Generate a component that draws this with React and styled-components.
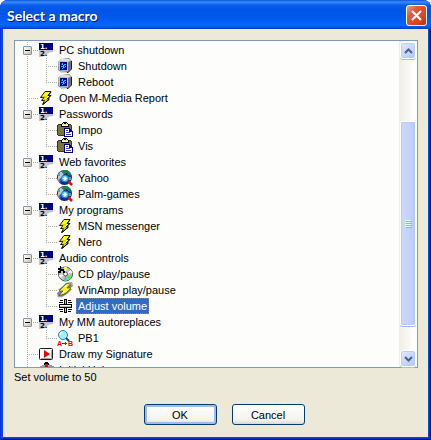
import React, { useState } from "react";
import styled, { createGlobalStyle, css } from "styled-components";

const COLORS = {
  face: "#ece9d8",
  paper: "#fdfefc",
  listBorder: "#7f9db9",
  line: "#aca899",
  select: "#316ac5",
};

const GlobalStyle = createGlobalStyle`
  * {
    box-sizing: border-box;
  }

  body {
    margin: 0;
    background: #fff;
    color: #000;
    font: 11px/16px "Liberation Sans", Arial, sans-serif;
  }

  button {
    font: inherit;
    color: inherit;
    padding: 0;
  }
`;

const Dialog = styled.div`
  display: flex;
  flex-direction: column;
  height: 100vh;
  padding: 0 3px 3px;
  overflow: hidden;
  border-radius: 8px 8px 0 0;
  background: #0848dc;
  box-shadow: inset 1px 0 #0831d9, inset -1px -1px #00138c,
    inset -2px -2px #0030c0;
`;

const TitleBar = styled.header`
  display: flex;
  align-items: center;
  justify-content: space-between;
  flex: none;
  height: 29px;
  margin: 0 -3px;
  padding: 2px 4px 0 7px;
  background: linear-gradient(
    #0a55d8 0,
    #3a8cff 2px,
    #0a5fea 5px,
    #0054e3 10px,
    #0058ee 18px,
    #0566ff 25px,
    #0055e8 27px,
    #0038b8 29px
  );
`;

const Title = styled.h1`
  margin: 0;
  color: #fff;
  font: bold 14px/18px Lato, sans-serif;
  text-shadow: 1px 1px #0a1883;
`;

const CloseButton = styled.button`
  display: flex;
  align-items: center;
  justify-content: center;
  width: 21px;
  height: 21px;
  border: 1px solid #fff;
  border-radius: 3px;
  background: linear-gradient(135deg, #f0a088 0, #e3593a 30%, #d8421c 75%, #b8300c);
`;

const Content = styled.main`
  display: flex;
  flex-direction: column;
  flex: 1;
  min-height: 0;
  padding: 11px 10px 12px 11px;
  background: ${COLORS.face};
`;

const ListBox = styled.div`
  display: flex;
  flex: 1;
  min-height: 0;
  border: 1px solid ${COLORS.listBorder};
  background: ${COLORS.paper};
`;

const Tree = styled.ul`
  flex: 1;
  margin: 0;
  padding: 1px 0 0;
  overflow: hidden;
  list-style: none;
`;

const Row = styled.li`
  display: flex;
  height: 16px;
  white-space: nowrap;
`;

const dots = (dir) =>
  `repeating-linear-gradient(${dir}, ${COLORS.line} 0 1px, transparent 1px 2px)`;

const RootCell = styled.span`
  flex: none;
  width: 23px;
  padding: 4px 0 0 8px;
  background-repeat: no-repeat;
  background-image: ${dots("to bottom")}, ${dots("to right")};
  background-size: 1px 16px, 11px 1px;
  background-position: 12px 0, 12px 8px;
  ${(p) =>
    p.$child &&
    css`
      background-size: 1px 16px, 0 0;
    `}
`;

const ChildCell = styled.span`
  flex: none;
  width: 19px;
  background-repeat: no-repeat;
  background-image: ${dots("to bottom")}, ${dots("to right")};
  background-size: 1px ${(p) => (p.$last ? 8 : 16)}px, 11px 1px;
  background-position: 8px 0, 8px 8px;
`;

const Toggle = styled.button`
  display: flex;
  align-items: center;
  justify-content: center;
  width: 9px;
  height: 9px;
  border: 1px solid #7898b5;
  border-radius: 1px;
  background: linear-gradient(135deg, #fff, #c9c3b4);
`;

const Label = styled.span`
  margin-left: 3px;
  padding: 0 2px;
  ${(p) =>
    p.$selected &&
    css`
      color: #fff;
      background: ${COLORS.select};
      outline: 1px dotted #7a8ca0;
      outline-offset: -1px;
    `}
`;

const ScrollBar = styled.div`
  display: flex;
  flex-direction: column;
  flex: none;
  width: 18px;
  padding: 1px 1px 0;
  background: linear-gradient(to right, #eeede5, #fefefb 80%);
`;

const ScrollButton = styled.button`
  display: flex;
  align-items: center;
  justify-content: center;
  flex: none;
  width: 16px;
  height: 17px;
  border: 1px solid #fff;
  border-radius: 3px;
  background: linear-gradient(135deg, #e1eafe, #aec8f7);
  box-shadow: inset 0 0 0 1px #bccdf5, 0 1px #a8bfea;
`;

const Track = styled.div`
  display: flex;
  flex-direction: column;
  flex: 1;
`;

const Thumb = styled.div`
  display: flex;
  align-items: center;
  justify-content: center;
  flex: 205;
  border: 1px solid #fff;
  border-radius: 2px;
  background: linear-gradient(to right, #c9d8fc, #c2d3fc 65%, #b0c8f8);
  box-shadow: inset 0 0 0 1px #b9cbf6, 0 1px #9cb8e8;
`;

const Gap = styled.div`
  flex: ${(p) => p.$size};
`;

const Status = styled.p`
  flex: none;
  margin: 1px 0 0;
`;

const Buttons = styled.footer`
  display: flex;
  justify-content: center;
  flex: none;
  gap: 15px;
  margin-top: 19px;
  padding-left: 16px;
`;

const PushButton = styled.button`
  width: 73px;
  height: 21px;
  border: 1px solid #003c74;
  border-radius: 3px;
  background: linear-gradient(#fff, #f3f2ec 80%, #dcd7cb);
  ${(p) =>
    p.$primary &&
    css`
      box-shadow: inset 0 0 0 2px #9ebcf0, inset 0 -2px #6982ee;
    `}
`;

const Svg = ({ w = 16, h = 16, children }) => (
  <svg
    width={w}
    height={h}
    viewBox={`0 0 ${w} ${h}`}
    style={{ flex: "none" }}
    aria-hidden="true"
  >
    {children}
  </svg>
);

const GroupIcon = () => (
  <Svg>
    <path fill="#c4c4c4" d="M1 8h14v2l-5 1-3 3-3 1H1z" />
    <path fill="#000080" d="M1 1h14v7H1z" shapeRendering="crispEdges" />
    <text x="2" y="7" fill="#fff" fontSize="7" fontWeight="bold" fontFamily="DejaVu Sans">
      1.
    </text>
    <text x="2" y="14" fill="#000" fontSize="7" fontWeight="bold" fontFamily="DejaVu Sans">
      2.
    </text>
  </Svg>
);

const ComputerIcon = () => (
  <Svg>
    <path d="M4 1 12 0 15 3 15 11 11 15 5 15 1 12 1 4z" fill="#8a8a8a" />
    <path d="M4 1 12 1 14 3 11 4 2 3z" fill="#dedede" />
    <path d="M1 3 11 4 11 13 2 12z" fill="#c8c8c8" />
    <path d="M11 4 14 3 14 10 11 13z" fill="#707070" />
    <path d="M14.500 3v8L11 14.500H6" stroke="#202020" fill="none" />
    <path d="M3 13l7 1v1H5z" fill="#d8d8d8" />
    <g shapeRendering="crispEdges">
      <path fill="#000098" d="M3 4h7v8H3z" />
      <path fill="#18c8ff" d="M5 5h1v2H5zM6 7h1v3H6zM7 6h2v1H7zM4 8h2v1H4zM8 8h1v1H8zM5 10h1v1H5z" />
      <path fill="#0070ff" d="M4 6h1v1H4zM7 7h1v1H7zM7 9h1v1H7z" />
    </g>
  </Svg>
);

const BoltIcon = () => (
  <Svg>
    <path
      d="M7 1.500h6L10 5.500h3L9.500 9h2L4.500 14.500 6.500 10.500h-3L6 7.500H2.500z"
      fill="#ffff00"
      stroke="#000"
      strokeWidth=".9"
    />
    <path d="M13 2l-3 4M12 6L9 9.500M11 9.500L5 14.500" stroke="#000" fill="none" />
    <path d="M4 7h5M5 10h4" stroke="#908800" strokeWidth=".7" />
  </Svg>
);

const PasteIcon = () => (
  <Svg>
    <g shapeRendering="crispEdges">
      <path fill="#383820" d="M1 2h13v1h1v10h-1v1H1v-1H0V3h1z" />
      <path fill="#74743c" d="M1 3h13v10H1z" />
      <path fill="#000" d="M4 2h1V1h1V0h4v1h1v1h1v3H4z" />
      <path fill="#f0ec60" d="M6 1h4v1h1v1H5V2h1z" />
      <path fill="#fff" d="M5 3h6v1H5z" />
      <path fill="#000" d="M7 1h2v1H7z" />
      <path fill="#000080" d="M7 6h6v1h1v1h1v1h1v6H7z" />
      <path fill="#fff" d="M8 7h4v3h3v4H8z" />
      <path fill="#4050a8" d="M9 8h2v1H9zM9 10h4v1H9zM9 12h5v1H9z" />
    </g>
  </Svg>
);

const WebIcon = () => (
  <Svg>
    <circle cx="7.500" cy="7.500" r="7.500" fill="#1c2090" />
    <path d="M1 6 3 2l4-1 1 2-2 2 1 2-3 2-2 4-1-4z" fill="#b8c8d4" />
    <path d="M6 0h4l3 2 1 4-3-1-1-2-3 1-2-1z" fill="#108848" />
    <path d="M3 8l2 1-1 4-2-2z" fill="#3048d0" />
    <path d="M1 4h2v2H1zM12 7h2v3h-2z" fill="#50a8a0" />
    <circle cx="8" cy="8.500" r="3.500" fill="#48d0e8" stroke="#1878c0" />
    <path d="M8 6l1 1.500 1.500 1L9 9.500 8 11 7 9.500 5.500 8.500 7 7.500z" fill="#fff" />
    <path d="M11 11l4 4" stroke="#e01010" strokeWidth="2.500" />
  </Svg>
);

const DiscIcon = () => (
  <Svg>
    <circle cx="8.500" cy="8" r="7" fill="#c4c4c4" stroke="#505050" />
    <path d="M8.500 8 7 1l3 0z" fill="#ffff40" />
    <path d="M8.500 8 14 4l1.500 3z" fill="#fff" />
    <path d="M8.500 8 14.500 11 12 14z" fill="#50e850" />
    <path d="M8.500 8 10 15 7 15z" fill="#30d0a0" />
    <path d="M8.500 8 3 12 2 9z" fill="#fff" />
    <circle cx="8.500" cy="8" r="2" fill="#fff" stroke="#555" />
    <path
      d="M1 2h2V0h1v3h3v2h1v2H6V5H4v2H1V5h1V4H1z"
      shapeRendering="crispEdges"
      fill="#000"
    />
    <path d="M4 1h1v2H4zM2 4h1v1H2z" fill="#20c020" />
  </Svg>
);

const WinAmpIcon = () => (
  <Svg>
    <path d="M9 1 15 0 16 4 12 7 15 7 10 12 5 15 1 15 0 11 4 8 1 8 6 4z" fill="#808080" />
    <path d="M9 2 14 1 10 6 14 6 9 11 2 14 6 9 2 9 7 4z" fill="#f8f028" stroke="#303000" strokeWidth=".5" />
    <path d="M8 4l3-2-3 4zM4 12l4-4-1 3z" fill="#fff" />
    <path d="M0 12l1 3 4 0M12 1l3 0 0 3" stroke="#c4c4c4" fill="none" />
  </Svg>
);

const VolumeIcon = () => (
  <Svg>
    <g shapeRendering="crispEdges">
      <path
        fill="#000"
        d="M7 1h3v14H7zM2 6h13v4H2zM3 2h3v1H3zM11 2h3v1h-3zM2 4h4v1H2zM11 4h4v1h-4zM2 11h4v1H2zM11 11h4v1h-4zM3 13h3v1H3zM11 13h3v1h-3z"
      />
      <path fill="#b8b8b8" d="M8 2h1v4H8zM8 10h1v4H8z" />
      <path fill="#fff" d="M3 7h11v1H3z" />
      <path fill="#b8b8b8" d="M3 8h11v1H3z" />
    </g>
  </Svg>
);

const ReplaceIcon = () => (
  <Svg>
    <circle cx="6" cy="5" r="4.500" fill="#a0f0f8" stroke="#208898" />
    <path d="M3 5a3 3 0 0 1 3-3" stroke="#fff" fill="none" />
    <path d="M9 8l3 3" stroke="#1038a0" strokeWidth="2" />
    <text x="0" y="16" fill="#f00000" fontSize="7" fontWeight="bold" fontFamily="Liberation Sans">
      A
    </text>
    <text x="11" y="16" fill="#f00000" fontSize="7" fontWeight="bold" fontFamily="Liberation Sans">
      B
    </text>
    <path d="M5 13h3v-1h1v1h1v1H9v1H8v-1H5z" fill="#e00000" shapeRendering="crispEdges" />
  </Svg>
);

const PlayIcon = () => (
  <Svg>
    <rect x="1.500" y="2.500" width="13" height="11" rx="1" fill="#fff" stroke="#181818" />
    <path d="M3 12.500h11M13.500 4v9" stroke="#aaa" />
    <path d="M6 4l6 4-6 4z" fill="#f00000" />
  </Svg>
);

const RecordIcon = () => (
  <Svg>
    <g shapeRendering="crispEdges">
      <path d="M2 4h2V3h2V2h6v1h2v1h2v1H2z" fill="#999" />
      <path d="M7 0h3v1h1v2H6V1h1z" fill="#000" />
      <path d="M7 2h3v3H7z" fill="#f00000" />
    </g>
  </Svg>
);

const ITEMS = [
  {
    name: "PC shutdown",
    items: [
      { name: "Shutdown", icon: ComputerIcon },
      { name: "Reboot", icon: ComputerIcon },
    ],
  },
  { name: "Open M-Media Report", icon: BoltIcon },
  {
    name: "Passwords",
    items: [
      { name: "Impo", icon: PasteIcon },
      { name: "Vis", icon: PasteIcon },
    ],
  },
  {
    name: "Web favorites",
    items: [
      { name: "Yahoo", icon: WebIcon },
      { name: "Palm-games", icon: WebIcon },
    ],
  },
  {
    name: "My programs",
    items: [
      { name: "MSN messenger", icon: BoltIcon },
      { name: "Nero", icon: BoltIcon },
    ],
  },
  {
    name: "Audio controls",
    items: [
      { name: "CD play/pause", icon: DiscIcon },
      { name: "WinAmp play/pause", icon: WinAmpIcon },
      { name: "Adjust volume", icon: VolumeIcon },
    ],
  },
  { name: "My MM autoreplaces", items: [{ name: "PB1", icon: ReplaceIcon }] },
  { name: "Draw my Signature", icon: PlayIcon },
  { name: "Initial Help", icon: RecordIcon },
];

const App = () => {
  const [selected, setSelected] = useState("Adjust volume");
  const [closed, setClosed] = useState([]);

  const toggle = (name) =>
    setClosed(
      closed.includes(name)
        ? closed.filter((n) => n !== name)
        : [...closed, name]
    );

  const renderLabel = (name) => (
    <Label $selected={selected === name} onClick={() => setSelected(name)}>
      {name}
    </Label>
  );

  return (
    <>
      <GlobalStyle />
      <Dialog role="dialog" aria-labelledby="title">
        <TitleBar>
          <Title id="title">Select a macro</Title>
          <CloseButton aria-label="Close">
            <Svg w={13} h={13}>
              <path d="M2 2l9 9M11 2l-9 9" stroke="#fff" strokeWidth="2.200" />
            </Svg>
          </CloseButton>
        </TitleBar>
        <Content>
          <ListBox>
            <Tree role="tree" aria-label="Macros">
              {ITEMS.map(({ name, items, icon }) => {
                const Icon = icon || GroupIcon;
                const open = items && !closed.includes(name);
                return (
                  <React.Fragment key={name}>
                    <Row role="treeitem" aria-level={1}>
                      <RootCell>
                        {items && (
                          <Toggle
                            aria-label={`Toggle ${name}`}
                            onClick={() => toggle(name)}
                          >
                            <Svg w={5} h={5}>
                              <path d={open ? "M0 2h5v1H0z" : "M0 2h5v1H0zM2 0h1v5H2z"} />
                            </Svg>
                          </Toggle>
                        )}
                      </RootCell>
                      <Icon />
                      {renderLabel(name)}
                    </Row>
                    {open &&
                      items.map((item, i) => (
                        <Row key={item.name} role="treeitem" aria-level={2}>
                          <RootCell $child />
                          <ChildCell $last={i === items.length - 1} />
                          <item.icon />
                          {renderLabel(item.name)}
                        </Row>
                      ))}
                  </React.Fragment>
                );
              })}
            </Tree>
            <ScrollBar>
              <ScrollButton aria-label="Scroll up">
                <Svg w={9} h={6}>
                  <path d="M1 5l3.500-3.500L8 5" stroke="#4d6185" strokeWidth="2" fill="none" />
                </Svg>
              </ScrollButton>
              <Track>
                <Gap $size={63} />
                <Thumb>
                  <Svg w={7} h={8}>
                    <path d="M0 0h6v1H0zM0 2h6v1H0zM0 4h6v1H0zM0 6h6v1H0z" fill="#eef4fe" />
                    <path d="M1 1h6v1H1zM1 3h6v1H1zM1 5h6v1H1zM1 7h6v1H1z" fill="#8cb0f8" />
                  </Svg>
                </Thumb>
                <Gap $size={24} />
              </Track>
              <ScrollButton aria-label="Scroll down">
                <Svg w={9} h={6}>
                  <path d="M1 1l3.500 3.500L8 1" stroke="#4d6185" strokeWidth="2" fill="none" />
                </Svg>
              </ScrollButton>
            </ScrollBar>
          </ListBox>
          <Status>Set volume to 50</Status>
          <Buttons>
            <PushButton $primary>OK</PushButton>
            <PushButton>Cancel</PushButton>
          </Buttons>
        </Content>
      </Dialog>
    </>
  );
};

export default App;
